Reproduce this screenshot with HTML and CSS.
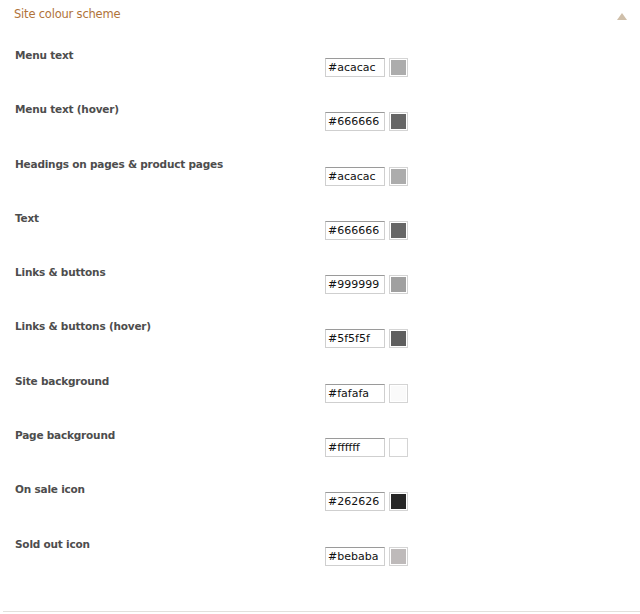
FILE: index.html
```html
<!DOCTYPE html>
<html lang="en">

<head>
    <meta charset="UTF-8">
    <title>Site colour scheme</title>
    <link rel="stylesheet" href="styles.css">
</head>

<body>
    <div class="panel">
        <div class="panel-head">
            <span class="panel-title">Site colour scheme</span>
            <span class="toggle"></span>
        </div>

        <div class="rows">
            <div class="row">
                <label>Menu text</label>
                <div class="field"><input type="text" value="#acacac"><span class="swatch"><i style="background:#acacac"></i></span></div>
            </div>
            <div class="row">
                <label>Menu text (hover)</label>
                <div class="field"><input type="text" value="#666666"><span class="swatch"><i style="background:#666666"></i></span></div>
            </div>
            <div class="row">
                <label>Headings on pages &amp; product pages</label>
                <div class="field"><input type="text" value="#acacac"><span class="swatch"><i style="background:#acacac"></i></span></div>
            </div>
            <div class="row">
                <label>Text</label>
                <div class="field"><input type="text" value="#666666"><span class="swatch"><i style="background:#666666"></i></span></div>
            </div>
            <div class="row">
                <label>Links &amp; buttons</label>
                <div class="field"><input type="text" value="#999999"><span class="swatch"><i style="background:#a0a0a0"></i></span></div>
            </div>
            <div class="row">
                <label>Links &amp; buttons (hover)</label>
                <div class="field"><input type="text" value="#5f5f5f"><span class="swatch"><i style="background:#5f5f5f"></i></span></div>
            </div>
            <div class="row">
                <label>Site background</label>
                <div class="field"><input type="text" value="#fafafa"><span class="swatch"><i style="background:#fafafa"></i></span></div>
            </div>
            <div class="row">
                <label>Page background</label>
                <div class="field"><input type="text" value="#ffffff"><span class="swatch"><i style="background:#ffffff"></i></span></div>
            </div>
            <div class="row">
                <label>On sale icon</label>
                <div class="field"><input type="text" value="#262626"><span class="swatch"><i style="background:#262626"></i></span></div>
            </div>
            <div class="row">
                <label>Sold out icon</label>
                <div class="field"><input type="text" value="#bebaba"><span class="swatch"><i style="background:#bebaba"></i></span></div>
            </div>
        </div>
    </div>
</body>

</html>
```

FILE: styles.css
```css
body {
    margin: 0;
    background: #fff;
    font-family: "DejaVu Sans", Verdana, sans-serif;
}

.panel {
    height: 611px;
    border-bottom: 1px solid #e2e0dc;
    margin-left: 3px;
}

.panel-head {
    display: flex;
    justify-content: space-between;
    align-items: center;
    height: 27px;
    padding: 0 13px 0 11px;
}

.panel-title {
    font-size: 11.5px;
    color: #b0733a;
    letter-spacing: -0.2px;
}

.toggle {
    width: 0;
    height: 0;
    border-left: 5px solid transparent;
    border-right: 5px solid transparent;
    border-bottom: 7px solid #cfbfaa;
    margin-top: 6px;
}

.rows {
    padding-top: 20px;
}

.row {
    display: flex;
    align-items: flex-start;
    height: 54.3px;
}

.row label {
    width: 310px;
    padding: 1px 0 0 12px;
    font-size: 10.5px;
    font-weight: bold;
    color: #4d4d4d;
    line-height: 14px;
    letter-spacing: -0.2px;
}

.field {
    display: flex;
    align-items: center;
    gap: 4px;
    margin-top: 11px;
}

.field input {
    width: 54px;
    height: 15px;
    padding: 1px 2px;
    border: 1px solid #cfcfcf;
    border-top-color: #9a9a9a;
    font-family: "DejaVu Sans", Verdana, sans-serif;
    font-size: 11px;
    color: #111;
    outline: none;
}

.swatch {
    display: block;
    width: 15px;
    height: 15px;
    padding: 1px;
    border: 1px solid #d4d4d4;
    background: #fff;
}

.swatch i {
    display: block;
    width: 100%;
    height: 100%;
}
```
